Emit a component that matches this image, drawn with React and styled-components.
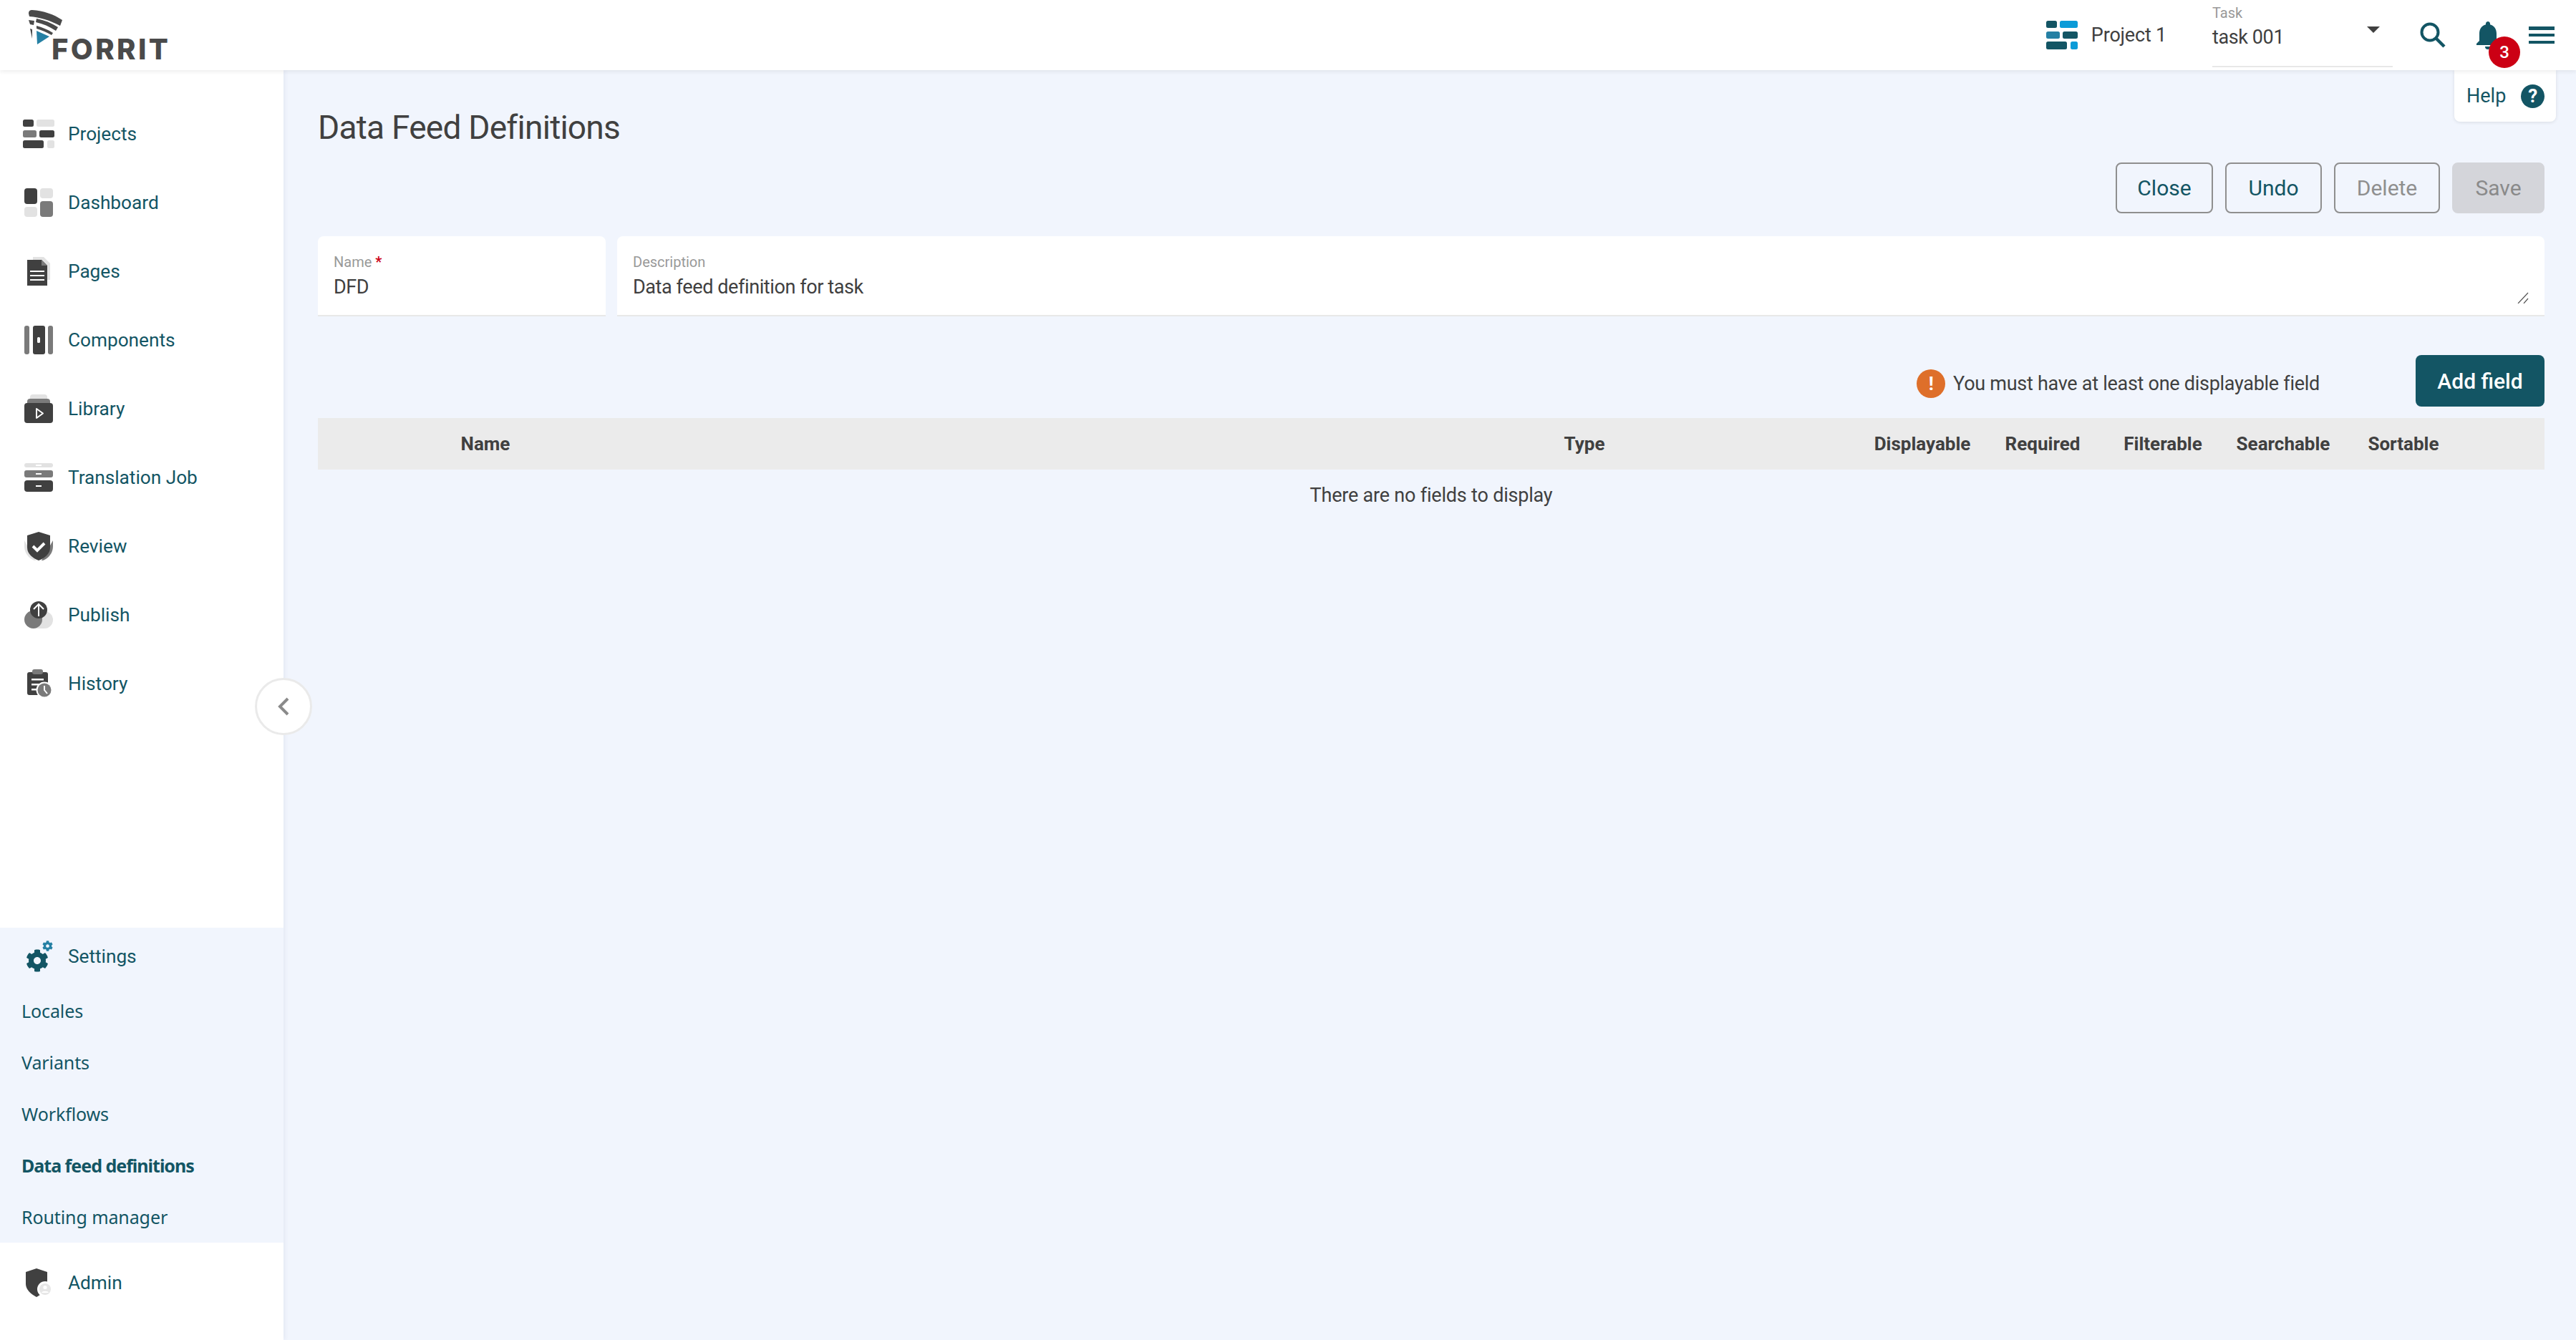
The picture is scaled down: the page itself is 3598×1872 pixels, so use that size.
import React from 'react'
import styled, { createGlobalStyle } from 'styled-components'
import { FaCog } from 'react-icons/fa'
import { MdNotifications } from 'react-icons/md'

const DARK = '#404040'
const MID = '#7a7a7a'
const LIGHT = '#e2e2e2'
const TEAL = '#135564'

const GlobalStyle = createGlobalStyle`
  html, body {
    margin: 0;
    padding: 0;
    background: #f1f5fd;
    font-family: Roboto, "Liberation Sans", sans-serif;
  }
  * { box-sizing: border-box; }
`

const Page = styled.div`
  width: 3598px;
  height: 1872px;
  display: flex;
  flex-direction: column;
  overflow: hidden;
`

const Header = styled.header`
  height: 98px;
  flex: none;
  display: flex;
  align-items: center;
  padding-right: 30px;
  background: #fff;
  box-shadow: 0 2px 6px rgba(0, 0, 0, 0.08);
  position: relative;
  z-index: 3;
`

const Logo = styled.div`
  width: 250px;
  height: 98px;
  position: relative;
  margin-right: auto;
`

const LogoMark = styled.svg`
  position: absolute;
  left: 0;
  top: 0;
`

const LogoText = styled.span`
  position: absolute;
  left: 72px;
  top: 45px;
  font-family: Inter, sans-serif;
  font-size: 40px;
  line-height: 48px;
  font-weight: 800;
  letter-spacing: 3.4px;
  color: #4a4a4a;
`

const ProjectName = styled.span`
  margin-left: 19px;
  margin-right: 64px;
  font-size: 27px;
  letter-spacing: -0.2px;
  color: ${DARK};
`

const TaskSelect = styled.div`
  width: 252px;
  height: 94px;
  align-self: flex-start;
  border-bottom: 2px solid #e8e8e8;
  padding-top: 6px;
  margin-right: 38px;
  display: flex;
  flex-direction: column;
`

const TaskLabel = styled.span`
  font-size: 20px;
  line-height: 24px;
  color: #999;
`

const TaskValueRow = styled.div`
  display: flex;
  justify-content: space-between;
  align-items: flex-start;
  padding-top: 6px;
  padding-right: 18px;
  font-size: 27px;
  line-height: 32px;
  letter-spacing: -0.4px;
  color: ${DARK};
`

const Caret = styled.span`
  width: 0;
  height: 0;
  margin-top: 1px;
  border-left: 9px solid transparent;
  border-right: 9px solid transparent;
  border-top: 9px solid ${DARK};
`

const BellWrap = styled.div`
  position: relative;
  width: 34px;
  height: 40px;
  margin-left: 42px;
  margin-right: 40px;
  display: flex;
  align-items: center;
  justify-content: center;
  color: ${TEAL};
  svg {
    flex: none;
  }
`

const Badge = styled.span`
  position: absolute;
  left: 18px;
  top: 22px;
  width: 44px;
  height: 44px;
  border-radius: 50%;
  background: #cc0014;
  color: #fff;
  font-size: 24px;
  font-weight: 500;
  display: flex;
  align-items: center;
  justify-content: center;
`

const Burger = styled.div`
  width: 36px;
  height: 24px;
  display: flex;
  flex-direction: column;
  justify-content: space-between;
  span {
    height: 4.5px;
    background: ${TEAL};
  }
`

const Body = styled.div`
  flex: 1;
  display: flex;
  min-height: 0;
`

const Sidebar = styled.aside`
  width: 396px;
  flex: none;
  position: relative;
  z-index: 2;
  display: flex;
  flex-direction: column;
  padding-top: 41px;
  padding-bottom: 24px;
  background: #fff;
  box-shadow: 2px 0 6px rgba(60, 70, 110, 0.07);
`

const NavRow = styled.div`
  height: ${p => p.$height || 96}px;
  display: flex;
  align-items: center;
  color: ${TEAL};
  font-size: 26.2px;
  flex: none;
`

const IconSlot = styled.span`
  width: 95px;
  flex: none;
  display: flex;
  justify-content: flex-start;
  padding-left: ${p => p.$left || 34}px;
  svg { display: block; }
`

const SettingsGroup = styled.div`
  margin-top: auto;
  background: #f1f5fd;
  height: 440px;
  display: flex;
  flex-direction: column;
`

const SubItem = styled.div`
  height: 72px;
  flex: none;
  display: flex;
  align-items: center;
  padding-left: 30px;
  color: ${TEAL};
  font-family: "Noto Sans", sans-serif;
  font-size: 25px;
  font-weight: ${p => (p.$active ? 700 : 400)};
  letter-spacing: ${p => (p.$active ? '-1px' : '-0.1px')};
`

const SettingsIcon = styled.span`
  width: 44px;
  height: 44px;
  position: relative;
  display: block;
  color: ${TEAL};
  svg {
    position: absolute;
  }
`

const CollapseButton = styled.button`
  position: absolute;
  right: -40px;
  top: 849px;
  width: 80px;
  height: 80px;
  padding: 0;
  border-radius: 50%;
  border: 3px solid #eaeaea;
  background: #fff;
  display: flex;
  align-items: center;
  justify-content: center;
`

const Main = styled.main`
  flex: 1;
  min-width: 0;
  position: relative;
  padding: 52px 44px 0 48px;
`

const HelpCard = styled.div`
  position: absolute;
  top: 0;
  right: 28px;
  width: 142px;
  height: 72px;
  padding-left: 17px;
  display: flex;
  align-items: center;
  gap: 21px;
  background: #fff;
  border-radius: 0 0 8px 8px;
  box-shadow: 0 1px 5px rgba(0, 0, 0, 0.1);
  color: ${TEAL};
  font-size: 27px;
`

const HelpDot = styled.span`
  width: 33px;
  height: 33px;
  border-radius: 50%;
  background: ${TEAL};
  color: #fff;
  font-size: 26px;
  font-weight: 700;
  display: flex;
  align-items: center;
  justify-content: center;
`

const Title = styled.h1`
  margin: 0 0 21px;
  font-size: 46px;
  line-height: 56px;
  font-weight: 400;
  letter-spacing: -0.75px;
  color: ${DARK};
`

const ButtonBar = styled.div`
  display: flex;
  justify-content: flex-end;
  gap: 17px;
  margin-bottom: 32px;
`

const Button = styled.button`
  height: 71px;
  width: ${p => p.$width}px;
  padding: 0;
  border-radius: 8px;
  border: 2px solid #8f8f8f;
  background: transparent;
  font-family: inherit;
  font-size: 30px;
  color: ${p => (p.$muted ? '#8f8f8f' : TEAL)};
`

const SaveButton = styled(Button)`
  border-color: #d4d5da;
  background: #d4d5da;
  color: #8a8a8a;
`

const Fields = styled.div`
  display: grid;
  grid-template-columns: 402px 1fr;
  gap: 16px;
  margin-bottom: 54px;
`

const Field = styled.div`
  height: 112px;
  padding: 24px 22px 0;
  background: #fff;
  border-bottom: 2px solid #e8e8e8;
  border-radius: 8px 8px 0 0;
  display: flex;
  flex-direction: column;
  position: relative;
`

const FieldLabel = styled.label`
  font-size: 20px;
  line-height: 24px;
  color: #999;
  b {
    color: #cc0014;
    font-weight: 700;
    margin-left: 5px;
  }
`

const inputText = `
  border: 0;
  outline: 0;
  padding: 0;
  background: transparent;
  font-family: inherit;
  font-size: 27px;
  line-height: 32px;
  letter-spacing: -0.4px;
  color: ${DARK};
`

const TextInput = styled.input`
  ${inputText}
  height: 38px;
  margin-top: 4px;
`

const TextArea = styled.textarea`
  ${inputText}
  height: 39px;
  margin-top: 7px;
  resize: none;
  display: block;
`

const ResizeGrip = styled.svg`
  position: absolute;
  right: 22px;
  bottom: 16px;
`

const ActionRow = styled.div`
  display: flex;
  justify-content: flex-end;
  align-items: flex-start;
  margin-bottom: 16px;
`

const Warning = styled.div`
  display: flex;
  align-items: center;
  gap: 11px;
  margin-top: 20px;
  margin-right: 134px;
  height: 40px;
  font-size: 27px;
  letter-spacing: -0.28px;
  color: ${DARK};
`

const WarningDot = styled.span`
  width: 40px;
  height: 40px;
  border-radius: 50%;
  background: #de6f2a;
  color: #fff;
  font-size: 26px;
  font-weight: 700;
  display: flex;
  align-items: center;
  justify-content: center;
`

const AddButton = styled.button`
  width: 180px;
  height: 72px;
  padding: 0;
  border: 0;
  border-radius: 8px;
  background: ${TEAL};
  color: #fff;
  font-family: inherit;
  font-size: 30px;
  font-weight: 500;
`

const TableHead = styled.div`
  height: 72px;
  display: grid;
  grid-template-columns: 468px 913px 776px repeat(5, 168px) 1fr;
  align-items: center;
  background: #ebebeb;
  font-size: 26px;
  font-weight: 700;
  color: ${DARK};
`

const HeadCell = styled.span`
  text-align: center;
  grid-column: ${p => p.$col};
`

const EmptyRow = styled.div`
  height: 72px;
  display: flex;
  align-items: center;
  justify-content: center;
  font-size: 27px;
  letter-spacing: -0.2px;
  color: ${DARK};
`

const Brick = ({ color = DARK, ...rest }) => <rect rx="2.5" fill={color} {...rest} />

const ProjectsIcon = ({ dark = DARK, mid = MID, light = LIGHT }) => (
  <svg width="44" height="40" viewBox="0 0 44 40">
    <Brick color={dark} x="0" y="0" width="15" height="10" />
    <Brick color={light} x="19" y="0" width="25" height="10" />
    <Brick color={mid} x="0" y="15" width="19" height="10" />
    <Brick color={dark} x="23" y="15" width="21" height="10" />
    <Brick color={dark} x="0" y="29" width="29" height="11" />
    <Brick color={light} x="34" y="29" width="10" height="11" />
  </svg>
)

const DashboardIcon = () => (
  <svg width="40" height="40" viewBox="0 0 40 40">
    <rect rx="4" fill={DARK} x="0" y="0" width="18" height="22" />
    <rect rx="4" fill={LIGHT} x="22" y="0" width="18" height="14" />
    <rect rx="4" fill={LIGHT} x="0" y="26" width="18" height="14" />
    <rect rx="4" fill={MID} x="22" y="18" width="18" height="22" />
  </svg>
)

const PagesIcon = () => (
  <svg width="40" height="40" viewBox="0 0 40 40">
    <path d="M12 0h15l9 9v23H12z" fill={LIGHT} />
    <path d="M4 4h20l8 8v28H4z" fill={DARK} />
    <path d="M24 4l8 8h-8z" fill={MID} />
    <path d="M8 19h20v2H8zM8 25h20v2H8zM8 31h20v2H8z" fill="#fff" />
  </svg>
)

const ComponentsIcon = () => (
  <svg width="40" height="40" viewBox="0 0 40 40">
    <rect rx="3" fill={MID} x="0" y="0" width="7" height="40" />
    <rect rx="3" fill={DARK} x="12" y="0" width="17" height="40" />
    <rect rx="3" fill={MID} x="33" y="0" width="7" height="40" />
    <rect rx="1.5" fill="#fff" x="18" y="16" width="4" height="8" />
  </svg>
)

const LibraryIcon = () => (
  <svg width="40" height="40" viewBox="0 0 40 40">
    <rect rx="4" fill={LIGHT} x="8" y="0" width="24" height="12" />
    <rect rx="4" fill={MID} x="4" y="6" width="32" height="12" />
    <rect rx="4" fill={DARK} x="0" y="12" width="40" height="28" />
    <path d="M17 20l9 6.5-9 6.5z" fill="none" stroke="#fff" strokeWidth="2" strokeLinejoin="round" />
  </svg>
)

const TranslationIcon = () => (
  <svg width="40" height="40" viewBox="0 0 40 40">
    <rect rx="3" fill={LIGHT} x="0" y="0" width="40" height="6" />
    <rect rx="3" fill={MID} x="0" y="10" width="40" height="10" />
    <rect rx="4" fill={DARK} x="0" y="24" width="40" height="16" />
    <path d="M16 2h8v2h-8zM16 14h8v2h-8zM16 31h8v2h-8z" fill="#fff" />
  </svg>
)

const ReviewIcon = () => (
  <svg width="40" height="40" viewBox="0 0 40 40">
    <path d="M0 12v8c0 12 10 20 16 20z" fill={LIGHT} />
    <path d="M40 12v8c0 12-10 20-16 20z" fill={MID} />
    <path d="M20 0l16 5v17c0 9-8 15-16 18C12 37 4 31 4 22V5z" fill={DARK} />
    <path d="M12 20l6 6 10-10" fill="none" stroke="#fff" strokeWidth="4" />
  </svg>
)

const PublishIcon = () => (
  <svg width="40" height="40" viewBox="0 0 40 40">
    <path d="M20 15h8a12 12 0 0 1 0 24H12z" fill={LIGHT} />
    <circle cx="12.5" cy="26.5" r="12.5" fill={MID} />
    <circle cx="20" cy="13" r="12" fill={DARK} />
    <path d="M20 22V5M13 12l7-7 7 7" fill="none" stroke="#fff" strokeWidth="2" />
  </svg>
)

const HistoryIcon = () => (
  <svg width="40" height="40" viewBox="0 0 40 40">
    <rect rx="3" fill={DARK} x="4" y="4" width="29" height="32" />
    <rect rx="3" fill={MID} x="11" y="0" width="15" height="7" />
    <path d="M10 13h17v2.5H10zM10 20h17v2.5H10zM10 27h10v2.5H10z" fill="#fff" />
    <circle cx="28" cy="29" r="11.5" fill="#fff" />
    <circle cx="28" cy="29" r="9.5" fill={MID} />
    <path d="M28 23v6l4 5" fill="none" stroke="#fff" strokeWidth="2" />
  </svg>
)

const AdminIcon = () => (
  <svg width="40" height="40" viewBox="0 0 40 40">
    <path d="M17 0l15 5v17c0 7-7 14-15 18C9 36 2 29 2 22V5z" fill={DARK} />
    <circle cx="29" cy="29" r="11" fill="#fff" />
    <circle cx="29" cy="29" r="8" fill="#e6e6e6" />
    <circle cx="29" cy="26.5" r="2.6" fill="#fff" />
    <path d="M24 34c1-3 9-3 10 0z" fill="#fff" />
  </svg>
)

const SearchIcon = () => (
  <svg width="36" height="36" viewBox="0 0 36 36" fill="none" stroke={TEAL}>
    <circle cx="14" cy="14" r="11.5" strokeWidth="4" />
    <path d="M22.5 22.5L34 34" strokeWidth="4.5" />
  </svg>
)

const navItems = [
  ['Projects', <ProjectsIcon />, 32],
  ['Dashboard', <DashboardIcon />],
  ['Pages', <PagesIcon />],
  ['Components', <ComponentsIcon />],
  ['Library', <LibraryIcon />],
  ['Translation Job', <TranslationIcon />],
  ['Review', <ReviewIcon />],
  ['Publish', <PublishIcon />],
  ['History', <HistoryIcon />],
]

const settingsItems = ['Locales', 'Variants', 'Workflows', 'Data feed definitions', 'Routing manager']

const columns = [
  ['Name', 1],
  ['Type', 3],
  ['Displayable', 4],
  ['Required', 5],
  ['Filterable', 6],
  ['Searchable', 7],
  ['Sortable', 8],
]

const App = () => (
  <Page>
    <GlobalStyle />
    <Header>
      <Logo>
        <LogoMark width="100" height="70" viewBox="0 0 100 70">
          <path d="M40 19c0-4 2-5 5-5 16 1 30 6 42 14l-3 8C71 29 56 24 41 23z" fill="#4a4a4a" />
          <path d="M51 26c11 2 21 6 30 12l-3 5C69 37 60 33 50 31z" fill="#4a4a4a" />
          <path d="M51 36c8 2 15 5 23 10l-2 3c-7-4-14-7-21-9z" fill="#4a4a4a" />
          <path d="M40 28l8 1-1 6-5-1zM42 40l3 1v13z" fill="#4a4a4a" />
          <path d="M51 43l18 8-17 11z" fill="#2580a4" />
        </LogoMark>
        <LogoText>FORRIT</LogoText>
      </Logo>
      <ProjectsIcon dark={TEAL} mid="#2580a4" light="#0b9bd8" />
      <ProjectName>Project 1</ProjectName>
      <TaskSelect>
        <TaskLabel>Task</TaskLabel>
        <TaskValueRow>
          task 001
          <Caret />
        </TaskValueRow>
      </TaskSelect>
      <SearchIcon />
      <BellWrap>
        <MdNotifications size={48} />
        <Badge>3</Badge>
      </BellWrap>
      <Burger>
        <span />
        <span />
        <span />
      </Burger>
    </Header>
    <Body>
      <Sidebar>
        {navItems.map(([label, icon, left]) => (
          <NavRow key={label}>
            <IconSlot $left={left}>{icon}</IconSlot>
            {label}
          </NavRow>
        ))}
        <SettingsGroup>
          <NavRow $height={80}>
            <IconSlot>
              <SettingsIcon>
                <FaCog size={32} style={{ left: 2, top: 12 }} />
                <FaCog size={15} color="#2580a4" style={{ left: 25, top: 0 }} />
              </SettingsIcon>
            </IconSlot>
            Settings
          </NavRow>
          {settingsItems.map(item => (
            <SubItem key={item} $active={item === 'Data feed definitions'}>
              {item}
            </SubItem>
          ))}
        </SettingsGroup>
        <NavRow $height={112}>
          <IconSlot>
            <AdminIcon />
          </IconSlot>
          Admin
        </NavRow>
        <CollapseButton aria-label="Collapse">
          <svg width="18" height="26" viewBox="0 0 18 26" fill="none" stroke="#8a8a8a" strokeWidth="4">
            <path d="M15 2L4 13l11 11" />
          </svg>
        </CollapseButton>
      </Sidebar>
      <Main>
        <HelpCard>
          Help
          <HelpDot>?</HelpDot>
        </HelpCard>
        <Title>Data Feed Definitions</Title>
        <ButtonBar>
          <Button $width={136}>Close</Button>
          <Button $width={135}>Undo</Button>
          <Button $width={148} $muted>Delete</Button>
          <SaveButton $width={129}>Save</SaveButton>
        </ButtonBar>
        <Fields>
          <Field>
            <FieldLabel>Name<b>*</b></FieldLabel>
            <TextInput readOnly value="DFD" />
          </Field>
          <Field>
            <FieldLabel>Description</FieldLabel>
            <TextArea readOnly value="Data feed definition for task" />
            <ResizeGrip width="16" height="16" viewBox="0 0 16 16" stroke="#555" strokeWidth="1.2">
              <path d="M1 16L15 1M9 16L15 9" />
            </ResizeGrip>
          </Field>
        </Fields>
        <ActionRow>
          <Warning>
            <WarningDot>!</WarningDot>
            You must have at least one displayable field
          </Warning>
          <AddButton>Add field</AddButton>
        </ActionRow>
        <TableHead>
          {columns.map(([label, col]) => (
            <HeadCell key={label} $col={col}>{label}</HeadCell>
          ))}
        </TableHead>
        <EmptyRow>There are no fields to display</EmptyRow>
      </Main>
    </Body>
  </Page>
)

export default App
